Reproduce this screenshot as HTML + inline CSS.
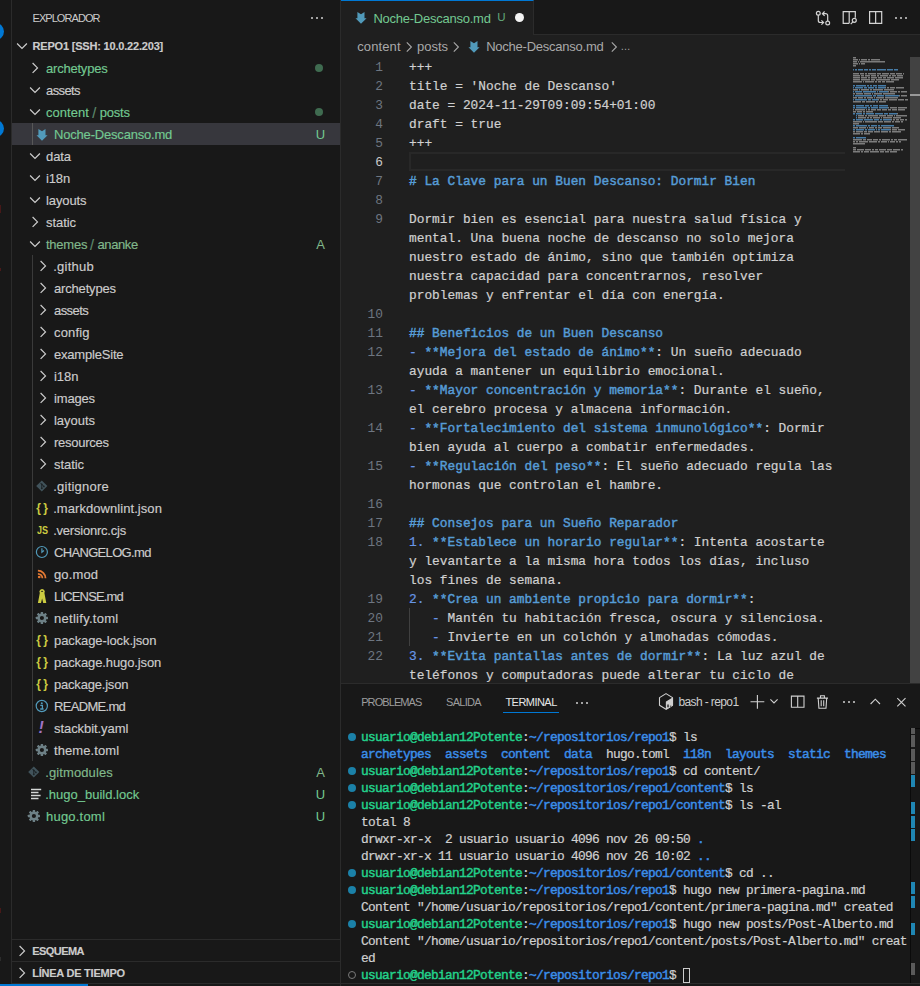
<!DOCTYPE html>
<html lang="es">
<head>
<meta charset="utf-8">
<title>Noche-Descanso.md - repo1 [SSH: 10.0.22.203]</title>
<style>
*{box-sizing:border-box;margin:0;padding:0}
html,body{width:920px;height:986px;overflow:hidden;background:#181818}
body{position:relative;font-family:"Liberation Sans",sans-serif;font-size:13px;color:#ccc;-webkit-font-smoothing:antialiased}
.abs{position:absolute}
/* activity strip */
#act{left:0;top:0;width:12px;height:986px;background:#181818;border-right:1px solid #2b2b2b;overflow:hidden}
.badge{position:absolute;left:-13px;width:17px;height:17px;border-radius:50%;background:#0078d4}
/* sidebar */
#side{left:12px;top:0;width:329px;height:986px;background:#181818;border-right:1px solid #2b2b2b;overflow:hidden}
.row{position:absolute;left:0;width:328px;height:22px;line-height:22px;white-space:nowrap}
.row .t{position:absolute;top:1px;-webkit-text-stroke-width:.15px}
.row .st{position:absolute;top:1px;right:11.5px;width:16px;text-align:center}
.g1{color:#73c991}
.g2{color:#81b88b}
.sep{color:#5d8a6d}
svg{position:absolute;overflow:visible}
.chev{fill:none;stroke:#cdcdcd;stroke-width:1.2}
/* editor */
#tabs{left:341px;top:0;width:579px;height:35px;background:#181818;border-bottom:1px solid #2b2b2b}
#tab{left:0;top:0;width:193px;height:35px;background:#1f1f1f;border-top:1px solid #0078d4;border-right:1px solid #2b2b2b}
#ed{left:341px;top:35px;width:579px;height:648px;background:#1f1f1f;overflow:hidden}
.mono{font-family:"Liberation Mono",monospace}
.ln{position:absolute;left:0;width:42px;text-align:right;color:#6e7681;height:19px;line-height:19px;font-size:12.83px}
.cl{position:absolute;left:68px;height:19px;line-height:19px;white-space:pre;font-size:12.83px;color:#d0d0d0;-webkit-text-stroke-width:.2px}
.h{color:#569cd6;-webkit-text-stroke-width:.45px}
.m{color:#6796e6}
/* panel */
#panel{left:341px;top:683px;width:579px;height:303px;background:#181818;border-top:1px solid #2b2b2b;overflow:hidden}
.tl{position:absolute;left:20px;height:18px;line-height:18px;white-space:pre;font-size:12.83px;letter-spacing:-0.7px;color:#d0d0d0;-webkit-text-stroke-width:.2px}
.tg{color:#23d18b;-webkit-text-stroke-width:.45px}
.tb{color:#3b8eea;-webkit-text-stroke-width:.45px}
.dot{position:absolute;left:7px;width:8px;height:8px;border-radius:50%;background:#1b81a8}
.fi{position:absolute;height:22px;line-height:22px;font-family:"Liberation Sans",sans-serif}
.dots3{width:14px;height:2px}
.dots3 i{position:absolute;top:0;width:2px;height:2px;border-radius:50%;background:#d0d0d0}
.dots3 i:nth-child(1){left:0}.dots3 i:nth-child(2){left:5px}.dots3 i:nth-child(3){left:10px}
</style>
</head>
<body>
<div id="act" class="abs">
  <div class="badge" style="top:23.200px"></div>
  <div class="badge" style="top:119.500px"></div>
  <div class="abs" style="left:0;top:205px;width:1px;height:8px;background:#471818"></div>
  <div class="abs" style="left:0;top:268px;width:1px;height:3px;background:#4a1a1a"></div>
  <div class="abs" style="left:0;top:908px;width:1px;height:5px;background:#471818"></div>
  <div class="abs" style="left:0;top:957px;width:1px;height:4px;background:#2c2c2c"></div>
</div>
<div id="side" class="abs">
<div class="abs" style="left:20.500px;top:1px;height:35px;line-height:35px;font-size:11px;color:#ccc;letter-spacing:-0.94px">EXPLORADOR</div>
<div class="abs dots3" style="left:299px;top:17px"><i></i><i></i><i></i></div>
<div class="row" style="top:35px"><svg style="left:2px;top:3px" width="16" height="16" viewBox="0 0 16 16"><path class="chev" d="M3.100 5.500 L8 10.400 L12.900 5.500"/></svg><span class="t" style="left:20.500px;top:0;font-size:11px;font-weight:bold;color:#ccc;letter-spacing:-0.19px">REPO1 [SSH: 10.0.22.203]</span></div>
<div class="row" style="top:57px"><svg style="left:15px;top:3px" width="16" height="16" viewBox="0 0 16 16"><path class="chev" d="M5.600 3 L10.500 7.900 L5.600 12.800"/></svg><span class="t g1" style="left:34px;letter-spacing:-0.21px">archetypes</span><span class="abs" style="left:303px;top:7px;width:8px;height:8px;border-radius:50%;background:#3f6b50"></span></div>
<div class="row" style="top:79px"><svg style="left:15px;top:3px" width="16" height="16" viewBox="0 0 16 16"><path class="chev" d="M3.100 5.500 L8 10.400 L12.900 5.500"/></svg><span class="t " style="left:34px;letter-spacing:-0.60px">assets</span></div>
<div class="row" style="top:101px"><svg style="left:15px;top:3px" width="16" height="16" viewBox="0 0 16 16"><path class="chev" d="M3.100 5.500 L8 10.400 L12.900 5.500"/></svg><span class="t g1" style="left:34px;letter-spacing:0.05px">content</span><span class="t sep" style="left:80.2px;font-size:14.500px">/</span><span class="t g1" style="left:87.7px;letter-spacing:-0.20px">posts</span><span class="abs" style="left:303px;top:7px;width:8px;height:8px;border-radius:50%;background:#3f6b50"></span></div>
<div class="row" style="top:123px;background:#37373d"><svg style="left:22px;top:4px" width="16" height="16" viewBox="0 0 16 16"><path fill="#519aba" d="M4.4 2 8 4.200 11.500 2V8.200H13.600L8 13.800 2.500 8.200H4.400Z"/></svg><span class="t g1" style="left:42px;letter-spacing:-0.19px">Noche-Descanso.md</span><span class="st g1">U</span></div>
<div class="row" style="top:145px"><svg style="left:15px;top:3px" width="16" height="16" viewBox="0 0 16 16"><path class="chev" d="M3.100 5.500 L8 10.400 L12.900 5.500"/></svg><span class="t " style="left:34px;letter-spacing:-0.08px">data</span></div>
<div class="row" style="top:167px"><svg style="left:15px;top:3px" width="16" height="16" viewBox="0 0 16 16"><path class="chev" d="M3.100 5.500 L8 10.400 L12.900 5.500"/></svg><span class="t " style="left:34px;letter-spacing:-0.14px">i18n</span></div>
<div class="row" style="top:189px"><svg style="left:15px;top:3px" width="16" height="16" viewBox="0 0 16 16"><path class="chev" d="M3.100 5.500 L8 10.400 L12.900 5.500"/></svg><span class="t " style="left:34px;letter-spacing:-0.10px">layouts</span></div>
<div class="row" style="top:211px"><svg style="left:15px;top:3px" width="16" height="16" viewBox="0 0 16 16"><path class="chev" d="M5.600 3 L10.500 7.900 L5.600 12.800"/></svg><span class="t " style="left:34px;letter-spacing:-0.06px">static</span></div>
<div class="row" style="top:233px"><svg style="left:15px;top:3px" width="16" height="16" viewBox="0 0 16 16"><path class="chev" d="M3.100 5.500 L8 10.400 L12.900 5.500"/></svg><span class="t g2" style="left:34px;letter-spacing:-0.24px">themes</span><span class="t sep" style="left:77.9px;font-size:14.500px">/</span><span class="t g2" style="left:85.4px;letter-spacing:-0.36px">ananke</span><span class="st g2">A</span></div>
<div class="row" style="top:255px"><svg style="left:23px;top:3px" width="16" height="16" viewBox="0 0 16 16"><path class="chev" d="M5.600 3 L10.500 7.900 L5.600 12.800"/></svg><span class="t " style="left:41.2px;letter-spacing:0.26px">.github</span></div>
<div class="row" style="top:277px"><svg style="left:23px;top:3px" width="16" height="16" viewBox="0 0 16 16"><path class="chev" d="M5.600 3 L10.500 7.900 L5.600 12.800"/></svg><span class="t " style="left:42px;letter-spacing:-0.17px">archetypes</span></div>
<div class="row" style="top:299px"><svg style="left:23px;top:3px" width="16" height="16" viewBox="0 0 16 16"><path class="chev" d="M5.600 3 L10.500 7.900 L5.600 12.800"/></svg><span class="t " style="left:42px;letter-spacing:-0.58px">assets</span></div>
<div class="row" style="top:321px"><svg style="left:23px;top:3px" width="16" height="16" viewBox="0 0 16 16"><path class="chev" d="M5.600 3 L10.500 7.900 L5.600 12.800"/></svg><span class="t " style="left:42px;letter-spacing:0.15px">config</span></div>
<div class="row" style="top:343px"><svg style="left:23px;top:3px" width="16" height="16" viewBox="0 0 16 16"><path class="chev" d="M5.600 3 L10.500 7.900 L5.600 12.800"/></svg><span class="t " style="left:42px;letter-spacing:-0.20px">exampleSite</span></div>
<div class="row" style="top:365px"><svg style="left:23px;top:3px" width="16" height="16" viewBox="0 0 16 16"><path class="chev" d="M5.600 3 L10.500 7.900 L5.600 12.800"/></svg><span class="t " style="left:42px;letter-spacing:-0.04px">i18n</span></div>
<div class="row" style="top:387px"><svg style="left:23px;top:3px" width="16" height="16" viewBox="0 0 16 16"><path class="chev" d="M5.600 3 L10.500 7.900 L5.600 12.800"/></svg><span class="t " style="left:42px;letter-spacing:-0.17px">images</span></div>
<div class="row" style="top:409px"><svg style="left:23px;top:3px" width="16" height="16" viewBox="0 0 16 16"><path class="chev" d="M5.600 3 L10.500 7.900 L5.600 12.800"/></svg><span class="t " style="left:42px;letter-spacing:-0.04px">layouts</span></div>
<div class="row" style="top:431px"><svg style="left:23px;top:3px" width="16" height="16" viewBox="0 0 16 16"><path class="chev" d="M5.600 3 L10.500 7.900 L5.600 12.800"/></svg><span class="t " style="left:42px;letter-spacing:-0.26px">resources</span></div>
<div class="row" style="top:453px"><svg style="left:23px;top:3px" width="16" height="16" viewBox="0 0 16 16"><path class="chev" d="M5.600 3 L10.500 7.900 L5.600 12.800"/></svg><span class="t " style="left:42px;letter-spacing:-0.06px">static</span></div>
<div class="row" style="top:475px"><svg style="left:22px;top:3px" width="16" height="16" viewBox="0 0 16 16"><path fill="#41535b" d="M7.800 2.400 13.400 8 7.800 13.600 2.200 8z"/><path stroke="#1c2326" stroke-width="1" fill="none" d="M6.300 4.800 9.500 8M7.800 6.200v4.300"/><circle cx="7.800" cy="6.300" r=".9" fill="#1c2326"/><circle cx="7.800" cy="10.300" r=".9" fill="#1c2326"/><circle cx="9.900" cy="8.400" r=".9" fill="#1c2326"/></svg><span class="t " style="left:41.2px;letter-spacing:0.24px">.gitignore</span></div>
<div class="row" style="top:497px"><span class="fi" style="left:24.2px;top:0px;color:#cbcb41;font-weight:bold;font-size:12px;letter-spacing:2.400px">{}</span><span class="t " style="left:41.2px;letter-spacing:0.06px">.markdownlint.json</span></div>
<div class="row" style="top:519px"><span class="fi" style="left:24.7px;top:0px;color:#cbcb41;font-weight:bold;font-size:11px;transform:scaleX(.82);transform-origin:0 50%">JS</span><span class="t " style="left:41.2px;letter-spacing:-0.22px">.versionrc.cjs</span></div>
<div class="row" style="top:541px"><svg style="left:22px;top:3px" width="16" height="16" viewBox="0 0 16 16"><circle cx="7.900" cy="8" r="5.500" fill="none" stroke="#519aba" stroke-width="1.200"/><path d="M7.900 4.200V8.300L10 6.500" fill="none" stroke="#519aba" stroke-width="1.200"/></svg><span class="t " style="left:42px;letter-spacing:-0.67px">CHANGELOG.md</span></div>
<div class="row" style="top:563px"><svg style="left:22px;top:3px" width="16" height="16" viewBox="0 0 16 16"><circle cx="5.200" cy="11" r="1.350" fill="#e37933"/><path d="M3.900 7.800a4.500 4.500 0 0 1 4.500 4.500M3.900 4.700a7.600 7.600 0 0 1 7.600 7.600" fill="none" stroke="#e37933" stroke-width="1.800"/></svg><span class="t " style="left:42px;letter-spacing:0.14px">go.mod</span></div>
<div class="row" style="top:585px"><svg style="left:22px;top:3px" width="16" height="16" viewBox="0 0 16 16"><path fill="#cbcb41" d="M5.800 5.100 A2.700 2.700 0 1 1 10.400 5.100 L12.300 15 H9.200 L8.100 10.500 L7 15 H3.900 Z"/><path fill="#181818" d="M7 3.800 A1.100 1.100 0 1 1 9.200 3.800 Z"/></svg><span class="t " style="left:42px;letter-spacing:-0.83px">LICENSE.md</span></div>
<div class="row" style="top:607px"><svg style="left:22px;top:3px" width="16" height="16" viewBox="0 0 16 16"><rect x="6.700" y="1.900" width="2.400" height="12.200" rx=".4" transform="rotate(0 7.900 8)" fill="#6d8086"/><rect x="6.700" y="1.900" width="2.400" height="12.200" rx=".4" transform="rotate(45 7.900 8)" fill="#6d8086"/><rect x="6.700" y="1.900" width="2.400" height="12.200" rx=".4" transform="rotate(90 7.900 8)" fill="#6d8086"/><rect x="6.700" y="1.900" width="2.400" height="12.200" rx=".4" transform="rotate(135 7.900 8)" fill="#6d8086"/><circle cx="7.900" cy="8" r="4.500" fill="#6d8086"/><circle cx="7.900" cy="8" r="2.100" fill="#181818"/></svg><span class="t " style="left:42px;letter-spacing:0.28px">netlify.toml</span></div>
<div class="row" style="top:629px"><span class="fi" style="left:24.2px;top:0px;color:#cbcb41;font-weight:bold;font-size:12px;letter-spacing:2.400px">{}</span><span class="t " style="left:42px;letter-spacing:-0.10px">package-lock.json</span></div>
<div class="row" style="top:651px"><span class="fi" style="left:24.2px;top:0px;color:#cbcb41;font-weight:bold;font-size:12px;letter-spacing:2.400px">{}</span><span class="t " style="left:42px;letter-spacing:-0.12px">package.hugo.json</span></div>
<div class="row" style="top:673px"><span class="fi" style="left:24.2px;top:0px;color:#cbcb41;font-weight:bold;font-size:12px;letter-spacing:2.400px">{}</span><span class="t " style="left:42px;letter-spacing:-0.20px">package.json</span></div>
<div class="row" style="top:695px"><svg style="left:22px;top:3px" width="16" height="16" viewBox="0 0 16 16"><circle cx="7.800" cy="8" r="5.600" fill="none" stroke="#519aba" stroke-width="1.200"/><circle cx="7.800" cy="5.200" r="1" fill="#519aba"/><path d="M6.300 7.300h2.100v3.600M6.200 11h3.400" fill="none" stroke="#519aba" stroke-width="1.300"/></svg><span class="t " style="left:42px;letter-spacing:-0.68px">README.md</span></div>
<div class="row" style="top:717px"><span class="fi" style="left:26.6px;top:0px;color:#a074c4;font-weight:bold;font-style:italic;font-size:16px">!</span><span class="t " style="left:42px;letter-spacing:-0.07px">stackbit.yaml</span></div>
<div class="row" style="top:739px"><svg style="left:22px;top:3px" width="16" height="16" viewBox="0 0 16 16"><rect x="6.700" y="1.900" width="2.400" height="12.200" rx=".4" transform="rotate(0 7.900 8)" fill="#6d8086"/><rect x="6.700" y="1.900" width="2.400" height="12.200" rx=".4" transform="rotate(45 7.900 8)" fill="#6d8086"/><rect x="6.700" y="1.900" width="2.400" height="12.200" rx=".4" transform="rotate(90 7.900 8)" fill="#6d8086"/><rect x="6.700" y="1.900" width="2.400" height="12.200" rx=".4" transform="rotate(135 7.900 8)" fill="#6d8086"/><circle cx="7.900" cy="8" r="4.500" fill="#6d8086"/><circle cx="7.900" cy="8" r="2.100" fill="#181818"/></svg><span class="t " style="left:42px;letter-spacing:0.09px">theme.toml</span></div>
<div class="row" style="top:761px"><svg style="left:14px;top:3px" width="16" height="16" viewBox="0 0 16 16"><path fill="#41535b" d="M7.800 2.400 13.400 8 7.800 13.600 2.200 8z"/><path stroke="#1c2326" stroke-width="1" fill="none" d="M6.300 4.800 9.500 8M7.800 6.200v4.300"/><circle cx="7.800" cy="6.300" r=".9" fill="#1c2326"/><circle cx="7.800" cy="10.300" r=".9" fill="#1c2326"/><circle cx="9.900" cy="8.400" r=".9" fill="#1c2326"/></svg><span class="t g2" style="left:33.2px;letter-spacing:0.11px">.gitmodules</span><span class="st g2">A</span></div>
<div class="row" style="top:783px"><svg style="left:14px;top:3px" width="16" height="16" viewBox="0 0 16 16"><path d="M5 3.500h10.200M5 6.500h7.500M5 9.600h9.600M5 12.500h7.500" stroke="#d4d7d6" stroke-width="1.500" fill="none"/></svg><span class="t g1" style="left:33.2px;letter-spacing:-0.00px">.hugo_build.lock</span><span class="st g1">U</span></div>
<div class="row" style="top:805px"><svg style="left:14px;top:3px" width="16" height="16" viewBox="0 0 16 16"><rect x="6.700" y="1.900" width="2.400" height="12.200" rx=".4" transform="rotate(0 7.900 8)" fill="#6d8086"/><rect x="6.700" y="1.900" width="2.400" height="12.200" rx=".4" transform="rotate(45 7.900 8)" fill="#6d8086"/><rect x="6.700" y="1.900" width="2.400" height="12.200" rx=".4" transform="rotate(90 7.900 8)" fill="#6d8086"/><rect x="6.700" y="1.900" width="2.400" height="12.200" rx=".4" transform="rotate(135 7.900 8)" fill="#6d8086"/><circle cx="7.900" cy="8" r="4.500" fill="#6d8086"/><circle cx="7.900" cy="8" r="2.100" fill="#181818"/></svg><span class="t g1" style="left:34px;letter-spacing:0.21px">hugo.toml</span><span class="st g1">U</span></div>
<div class="abs" style="left:20px;top:123px;width:1px;height:22px;background:#585858"></div>
<div class="abs" style="left:20px;top:255px;width:1px;height:506px;background:#3a3a3a"></div>
<div class="abs" style="left:0;top:939px;width:328px;height:1px;background:#2b2b2b"></div>
<div class="row" style="top:940px"><svg style="left:2px;top:3px" width="16" height="16" viewBox="0 0 16 16"><path class="chev" d="M5.600 3 L10.500 7.900 L5.600 12.800"/></svg><span class="t" style="left:20.200px;top:0;font-size:11px;font-weight:bold;letter-spacing:-0.55px">ESQUEMA</span></div>
<div class="abs" style="left:0;top:961px;width:328px;height:1px;background:#2b2b2b"></div>
<div class="row" style="top:962px"><svg style="left:2px;top:3px" width="16" height="16" viewBox="0 0 16 16"><path class="chev" d="M5.600 3 L10.500 7.900 L5.600 12.800"/></svg><span class="t" style="left:20.200px;top:0;font-size:11px;font-weight:bold;letter-spacing:-0.23px">LÍNEA DE TIEMPO</span></div>
<div class="abs" style="left:0;top:983px;width:328px;height:1px;background:#2b2b2b"></div>
</div>
<div id="tabs" class="abs">
  <div id="tab" class="abs">
<svg style="left:11.6px;top:9px" width="16" height="16" viewBox="0 0 16 16"><path fill="#519aba" d="M4.4 2 8 4.200 11.500 2V8.200H13.600L8 13.800 2.500 8.200H4.400Z"/></svg><span class="abs g1" style="left:32.400px;top:1px;height:34px;line-height:34px;white-space:nowrap;letter-spacing:-0.24px">Noche-Descanso.md</span><span class="abs g1" style="left:156.200px;top:0;height:33px;line-height:33px;font-size:11.500px;opacity:.8">U</span><span class="abs" style="left:174px;top:12.300px;width:9px;height:9px;border-radius:50%;background:#f4f4f4"></span>
  </div>
<svg style="left:474.400px;top:10px" width="16" height="16" viewBox="0 0 16 16" fill="none" stroke="#d4d4d4" stroke-width="1.200"><circle cx="3.300" cy="3.200" r="1.900"/><circle cx="12.700" cy="13" r="1.900"/><path d="M3.300 5.100V10.500a2 2 0 0 0 2 2H8.300M6.400 10.300 8.600 12.500 6.400 14.700M12.700 11.100V5.700a2 2 0 0 0-2-2H7.700M9.600 1.500 7.400 3.700 9.600 5.900"/></svg>
<svg style="left:500px;top:10px" width="16" height="16" viewBox="0 0 16 16" fill="none" stroke="#d4d4d4" stroke-width="1.200"><path d="M14.300 7.800V1.600H2.200V13.300H8.200M8.200 1.600V13.300"/><circle cx="13.300" cy="10.300" r="2"/><path d="M11.900 11.800 9.700 14.100"/></svg>
<svg style="left:526px;top:10px" width="16" height="16" viewBox="0 0 16 16" fill="none" stroke="#d4d4d4" stroke-width="1.200"><path d="M2.600 1.600H14.700V13.300H2.600ZM8.650 1.600V13.300"/></svg>
<div class="abs dots3" style="left:554px;top:17px"><i></i><i></i><i></i></div>
</div>
<div id="ed" class="abs">
<div class="abs" style="left:0;top:1px;width:579px;height:22px;line-height:22px;color:#a9a9a9;white-space:nowrap"><span class="abs" style="left:16.200px;letter-spacing:0.11px">content</span><svg style="left:60px;top:3px" width="16" height="16" viewBox="0 0 16 16"><path d="M5.8 3.4 10.4 8 5.8 12.600" fill="none" stroke="#a9a9a9" stroke-width="1.1"/></svg><span class="abs" style="left:76px">posts</span><svg style="left:107px;top:3px" width="16" height="16" viewBox="0 0 16 16"><path d="M5.8 3.4 10.4 8 5.8 12.600" fill="none" stroke="#a9a9a9" stroke-width="1.1"/></svg><svg style="left:124.6px;top:2.5px" width="16" height="16" viewBox="0 0 16 16"><path fill="#519aba" d="M4.4 2 8 4.200 11.500 2V8.200H13.600L8 13.800 2.500 8.200H4.400Z"/></svg><span class="abs" style="left:145.200px;letter-spacing:-0.24px">Noche-Descanso.md</span><svg style="left:265px;top:3px" width="16" height="16" viewBox="0 0 16 16"><path d="M5.8 3.4 10.4 8 5.8 12.600" fill="none" stroke="#a9a9a9" stroke-width="1.1"/></svg><span class="abs" style="left:279.600px;font-size:10px">…</span></div>
<div class="ln mono" style="top:23px">1</div>
<div class="cl mono" style="top:23px">+++</div>
<div class="ln mono" style="top:42px">2</div>
<div class="cl mono" style="top:42px">title = 'Noche de Descanso'</div>
<div class="ln mono" style="top:61px">3</div>
<div class="cl mono" style="top:61px">date = 2024-11-29T09:09:54+01:00</div>
<div class="ln mono" style="top:80px">4</div>
<div class="cl mono" style="top:80px">draft = true</div>
<div class="ln mono" style="top:99px">5</div>
<div class="cl mono" style="top:99px">+++</div>
<div class="abs" style="left:68px;top:117px;width:436px;height:19px;border:2px solid #282828;border-right:none"></div>
<div class="ln mono" style="top:118px;color:#ccc">6</div>
<div class="ln mono" style="top:137px">7</div>
<div class="cl mono" style="top:137px"><span class="h"># La Clave para un Buen Descanso: Dormir Bien</span></div>
<div class="ln mono" style="top:156px">8</div>
<div class="ln mono" style="top:175px">9</div>
<div class="cl mono" style="top:175px">Dormir bien es esencial para nuestra salud física y</div>
<div class="cl mono" style="top:194px">mental. Una buena noche de descanso no solo mejora</div>
<div class="cl mono" style="top:213px">nuestro estado de ánimo, sino que también optimiza</div>
<div class="cl mono" style="top:232px">nuestra capacidad para concentrarnos, resolver</div>
<div class="cl mono" style="top:251px">problemas y enfrentar el día con energía.</div>
<div class="ln mono" style="top:270px">10</div>
<div class="ln mono" style="top:289px">11</div>
<div class="cl mono" style="top:289px"><span class="h">## Beneficios de un Buen Descanso</span></div>
<div class="ln mono" style="top:308px">12</div>
<div class="cl mono" style="top:308px"><span class="m">- </span><span class="h">**Mejora del estado de ánimo**</span>: Un sueño adecuado</div>
<div class="cl mono" style="top:327px">ayuda a mantener un equilibrio emocional.</div>
<div class="ln mono" style="top:346px">13</div>
<div class="cl mono" style="top:346px"><span class="m">- </span><span class="h">**Mayor concentración y memoria**</span>: Durante el sueño,</div>
<div class="cl mono" style="top:365px">el cerebro procesa y almacena información.</div>
<div class="ln mono" style="top:384px">14</div>
<div class="cl mono" style="top:384px"><span class="m">- </span><span class="h">**Fortalecimiento del sistema inmunológico**</span>: Dormir</div>
<div class="cl mono" style="top:403px">bien ayuda al cuerpo a combatir enfermedades.</div>
<div class="ln mono" style="top:422px">15</div>
<div class="cl mono" style="top:422px"><span class="m">- </span><span class="h">**Regulación del peso**</span>: El sueño adecuado regula las</div>
<div class="cl mono" style="top:441px">hormonas que controlan el hambre.</div>
<div class="ln mono" style="top:460px">16</div>
<div class="ln mono" style="top:479px">17</div>
<div class="cl mono" style="top:479px"><span class="h">## Consejos para un Sueño Reparador</span></div>
<div class="ln mono" style="top:498px">18</div>
<div class="cl mono" style="top:498px"><span class="m">1. </span><span class="h">**Establece un horario regular**</span>: Intenta acostarte</div>
<div class="cl mono" style="top:517px">y levantarte a la misma hora todos los días, incluso</div>
<div class="cl mono" style="top:536px">los fines de semana.</div>
<div class="ln mono" style="top:555px">19</div>
<div class="cl mono" style="top:555px"><span class="m">2. </span><span class="h">**Crea un ambiente propicio para dormir**</span>:</div>
<div class="ln mono" style="top:574px">20</div>
<div class="cl mono" style="top:574px">   <span class="m">- </span>Mantén tu habitación fresca, oscura y silenciosa.</div>
<div class="ln mono" style="top:593px">21</div>
<div class="cl mono" style="top:593px">   <span class="m">- </span>Invierte en un colchón y almohadas cómodas.</div>
<div class="ln mono" style="top:612px">22</div>
<div class="cl mono" style="top:612px"><span class="m">3. </span><span class="h">**Evita pantallas antes de dormir**</span>: La luz azul de</div>
<div class="cl mono" style="top:631px">teléfonos y computadoras puede alterar tu ciclo de</div>
<div class="abs" style="left:68px;top:573px;width:1px;height:38px;background:#404040"></div>
<svg style="left:0;top:0" width="569" height="200" viewBox="0 0 569 200" fill="none" stroke-width="1.400"><path stroke="#c8c8c8" stroke-opacity=".55" d="M512 22.8h3M512 24.8h5M518 24.8h1M520 24.8h6M527 24.8h2M530 24.8h9M512 26.8h4M517 26.8h1M519 26.8h25M512 28.8h5M518 28.8h1M520 28.8h4M512 30.8h3M512 38.8h6M519 38.8h4M524 38.8h2M527 38.8h8M536 38.8h4M541 38.8h7M549 38.8h5M555 38.8h6M562 38.8h1M512 40.8h7M520 40.8h3M524 40.8h5M530 40.8h5M536 40.8h2M539 40.8h8M548 40.8h2M551 40.8h4M556 40.8h6M512 42.8h7M520 42.8h6M527 42.8h2M530 42.8h6M537 42.8h4M542 42.8h3M546 42.8h7M554 42.8h8M512 44.8h7M520 44.8h9M530 44.8h4M535 44.8h14M550 44.8h8M512 46.8h9M522 46.8h1M524 46.8h9M534 46.8h2M537 46.8h3M541 46.8h3M545 46.8h8M544 52.8h1M546 52.8h2M549 52.8h5M555 52.8h8M512 54.8h5M518 54.8h1M520 54.8h8M529 54.8h2M532 54.8h10M543 54.8h10M547 56.8h1M549 56.8h7M557 56.8h2M560 56.8h6M512 58.8h2M515 58.8h7M523 58.8h7M531 58.8h1M533 58.8h8M542 58.8h12M558 60.8h1M560 60.8h6M512 62.8h4M517 62.8h5M523 62.8h2M526 62.8h6M533 62.8h1M535 62.8h8M544 62.8h13M537 64.8h1M539 64.8h2M542 64.8h5M548 64.8h8M557 64.8h6M564 64.8h3M512 66.8h8M521 66.8h3M525 66.8h9M535 66.8h2M538 66.8h7M547 72.8h1M549 72.8h7M557 72.8h9M512 74.8h1M514 74.8h10M525 74.8h1M527 74.8h2M530 74.8h5M536 74.8h4M541 74.8h5M547 74.8h3M551 74.8h5M557 74.8h7M512 76.8h3M516 76.8h5M522 76.8h2M525 76.8h7M556 78.8h1M517 80.8h6M524 80.8h2M527 80.8h10M538 80.8h7M546 80.8h6M553 80.8h1M555 80.8h11M517 82.8h8M526 82.8h2M529 82.8h2M532 82.8h7M540 82.8h1M542 82.8h9M552 82.8h8M550 84.8h1M552 84.8h2M555 84.8h3M559 84.8h4M564 84.8h2M512 86.8h9M522 86.8h1M524 86.8h12M537 86.8h5M543 86.8h7M551 86.8h2M554 86.8h5M560 86.8h2M512 88.8h6M512 92.8h5M518 92.8h7M526 92.8h1M528 92.8h5M534 92.8h2M537 92.8h4M542 92.8h8M551 92.8h7M549 94.8h1M551 94.8h5M557 94.8h7M512 96.8h2M515 96.8h7M523 96.8h3M527 96.8h5M533 96.8h6M540 96.8h7M548 96.8h2M551 96.8h9M512 98.8h7M520 98.8h2M523 98.8h6M512 104.8h9M522 104.8h3M526 104.8h5M532 104.8h5M538 104.8h2M541 104.8h8M550 104.8h2M553 104.8h3M557 104.8h9M512 106.8h2M515 106.8h2M518 106.8h9M528 106.8h8M537 106.8h2M540 106.8h6M547 106.8h1M549 106.8h5M555 106.8h2M558 106.8h2M512 108.8h12M512 112.8h3M512 114.8h3M516 114.8h7M524 114.8h6M531 114.8h2M534 114.8h3M538 114.8h7M546 114.8h5M552 114.8h7M560 114.8h2M512 116.8h7M520 116.8h2M523 116.8h5M529 116.8h9M539 116.8h4M544 116.8h4M549 116.8h7"/><path stroke="#569cd6" stroke-opacity=".75" d="M512 34.8h1M514 34.8h2M517 34.8h5M523 34.8h4M528 34.8h2M531 34.8h4M536 34.8h9M546 34.8h6M553 34.8h4M512 50.8h2M515 50.8h10M526 50.8h2M529 50.8h2M532 50.8h4M537 50.8h8M512 52.8h1M514 52.8h8M523 52.8h3M527 52.8h6M534 52.8h2M537 52.8h7M512 56.8h1M514 56.8h7M522 56.8h13M536 56.8h1M538 56.8h9M512 60.8h1M514 60.8h17M532 60.8h3M536 60.8h7M544 60.8h14M512 64.8h1M514 64.8h12M527 64.8h3M531 64.8h6M512 70.8h2M515 70.8h8M524 70.8h4M529 70.8h2M532 70.8h5M538 70.8h9M512 72.8h2M515 72.8h11M527 72.8h2M530 72.8h7M538 72.8h9M512 78.8h2M515 78.8h6M522 78.8h2M525 78.8h8M534 78.8h8M543 78.8h4M548 78.8h8M515 80.8h1M515 82.8h1M512 84.8h2M515 84.8h7M523 84.8h9M533 84.8h5M539 84.8h2M542 84.8h8M512 90.8h2M515 90.8h11M527 90.8h2M530 90.8h6M537 90.8h2M540 90.8h13M512 94.8h2M515 94.8h8M524 94.8h2M527 94.8h7M535 94.8h1M537 94.8h2M540 94.8h9M512 102.8h2M515 102.8h10"/></svg>
<div class="abs" style="left:569px;top:22px;width:10px;height:626px;background:#424242"></div>
<div class="abs" style="left:569px;top:59px;width:10px;height:2px;background:#9a9a9a"></div>
</div>
<div id="panel" class="abs">
<div class="abs" style="left:20.200px;top:7px;height:22px;line-height:22px;font-size:11px;color:#9d9d9d;letter-spacing:-0.91px">PROBLEMAS</div>
<div class="abs" style="left:105px;top:7px;height:22px;line-height:22px;font-size:11px;color:#9d9d9d;letter-spacing:-0.71px">SALIDA</div>
<div class="abs" style="left:164.400px;top:7px;height:22px;line-height:22px;font-size:11px;color:#e7e7e7;letter-spacing:-0.53px">TERMINAL</div>
<div class="abs" style="left:162px;top:28px;width:56px;height:1px;background:#0078d4"></div>
<div class="abs dots3" style="left:234.500px;top:17.500px"><i></i><i></i><i></i></div>
<svg style="left:316.300px;top:8.400px" width="18" height="20" viewBox="0 0 18 20" fill="none" stroke="#cfcfcf" stroke-width="1.100" stroke-linejoin="round"><path d="M9 1.600 15.500 5.600V13.300L9 17.300 2.500 13.300V5.600Z"/><path fill="#cfcfcf" d="M9.400 10 15.500 6.200V13.300L9.400 17Z"/><path stroke="#333" stroke-width="1" d="M11 12.600v2.600M10.300 13.200h1.500M10.300 14.700h1.500M12.900 14.200h1.400"/></svg>
<div class="abs" style="left:337.500px;top:7px;height:22px;line-height:22px;font-size:12px;color:#ccc;white-space:nowrap;letter-spacing:-0.62px">bash - repo1</div>
<svg style="left:409px;top:8.500px" width="16" height="16" viewBox="0 0 16 16" fill="none" stroke="#d0d0d0" stroke-width="1.1"><path d="M7.400 1.900V15.700M.500 8.800H14.300"/></svg>
<svg style="left:425px;top:9.200px" width="16" height="16" viewBox="0 0 16 16" fill="none" stroke="#d0d0d0" stroke-width="1.1"><path d="M4.400 6.300 8 9.900 11.600 6.300"/></svg>
<svg style="left:449px;top:8.500px" width="16" height="16" viewBox="0 0 16 16" fill="none" stroke="#d0d0d0" stroke-width="1.1"><path d="M1.400 3.100H14V14.300H1.400ZM7.700 3.100V14.300"/></svg>
<svg style="left:474px;top:8.500px" width="16" height="16" viewBox="0 0 16 16" fill="none" stroke="#d0d0d0" stroke-width="1.1"><path d="M1.900 5.100H13M5.500 5V2.700H9.400V5M3.200 5.100 3.900 15.200H11L11.700 5.100M6.200 7.200V13.200M8.700 7.200V13.200"/></svg>
<div class="abs dots3" style="left:502px;top:17px"><i></i><i></i><i></i></div>
<svg style="left:525px;top:8.500px" width="16" height="16" viewBox="0 0 16 16" fill="none" stroke="#d0d0d0" stroke-width="1.1"><path d="M4.600 11 9.300 6.200 14 11"/></svg>
<svg style="left:552px;top:8.500px" width="16" height="16" viewBox="0 0 16 16" fill="none" stroke="#d0d0d0" stroke-width="1.1"><path d="M4.300 5.100 12.500 13.300M12.500 5.100 4.300 13.300"/></svg>
<div class="dot" style="top:49px"></div>
<div class="tl mono" style="top:45px"><span class="tg">usuario@debian12Potente</span>:<span class="tb">~/repositorios/repo1</span>$ ls</div>
<div class="tl mono" style="top:62px"><span class="tb">archetypes</span>  <span class="tb">assets</span>  <span class="tb">content</span>  <span class="tb">data</span>  hugo.toml  <span class="tb">i18n</span>  <span class="tb">layouts</span>  <span class="tb">static</span>  <span class="tb">themes</span></div>
<div class="dot" style="top:83px"></div>
<div class="tl mono" style="top:79px"><span class="tg">usuario@debian12Potente</span>:<span class="tb">~/repositorios/repo1</span>$ cd content/</div>
<div class="dot" style="top:100px"></div>
<div class="tl mono" style="top:96px"><span class="tg">usuario@debian12Potente</span>:<span class="tb">~/repositorios/repo1/content</span>$ ls</div>
<div class="dot" style="top:117px"></div>
<div class="tl mono" style="top:113px"><span class="tg">usuario@debian12Potente</span>:<span class="tb">~/repositorios/repo1/content</span>$ ls -al</div>
<div class="tl mono" style="top:130px">total 8</div>
<div class="tl mono" style="top:147px">drwxr-xr-x  2 usuario usuario 4096 nov 26 09:50 <span class="tb">.</span></div>
<div class="tl mono" style="top:164px">drwxr-xr-x 11 usuario usuario 4096 nov 26 10:02 <span class="tb">..</span></div>
<div class="dot" style="top:185px"></div>
<div class="tl mono" style="top:181px"><span class="tg">usuario@debian12Potente</span>:<span class="tb">~/repositorios/repo1/content</span>$ cd ..</div>
<div class="dot" style="top:202px"></div>
<div class="tl mono" style="top:198px"><span class="tg">usuario@debian12Potente</span>:<span class="tb">~/repositorios/repo1</span>$ hugo new primera-pagina.md</div>
<div class="tl mono" style="top:215px">Content "/home/usuario/repositorios/repo1/content/primera-pagina.md" created</div>
<div class="dot" style="top:236px"></div>
<div class="tl mono" style="top:232px"><span class="tg">usuario@debian12Potente</span>:<span class="tb">~/repositorios/repo1</span>$ hugo new posts/Post-Alberto.md</div>
<div class="tl mono" style="top:249px">Content "/home/usuario/repositorios/repo1/content/posts/Post-Alberto.md" creat</div>
<div class="tl mono" style="top:266px">ed</div>
<div class="dot" style="top:287px;background:none;border:1.500px solid #7a7a7a"></div>
<div class="tl mono" style="top:283px"><span class="tg">usuario@debian12Potente</span>:<span class="tb">~/repositorios/repo1</span>$ </div>
<div class="abs" style="left:342px;top:284px;width:7px;height:15px;border:1px solid #ccc"></div>
<div class="abs" style="left:569px;top:44px;width:10px;height:255px;border-left:1px solid #0a0a0a;border-top:1px solid #0a0a0a"></div>
<div class="abs" style="left:570px;top:44px;width:4px;height:6px;background:#5a5a5a"></div>
<div class="abs" style="left:570px;top:51px;width:4px;height:12px;background:#5a5a5a"></div>
<div class="abs" style="left:570px;top:65px;width:4px;height:12px;background:#5a5a5a"></div>
<div class="abs" style="left:570px;top:78px;width:4px;height:12px;background:#5a5a5a"></div>
<div class="abs" style="left:570px;top:91px;width:4px;height:12px;background:#1f86b3"></div>
<div class="abs" style="left:570px;top:118px;width:4px;height:12px;background:#1f86b3"></div>
<div class="abs" style="left:570px;top:132px;width:4px;height:12px;background:#1f86b3"></div>
<div class="abs" style="left:570px;top:145px;width:4px;height:12px;background:#1f86b3"></div>
<div class="abs" style="left:570px;top:198px;width:4px;height:12px;background:#1f86b3"></div>
<div class="abs" style="left:570px;top:212px;width:4px;height:12px;background:#1f86b3"></div>
<div class="abs" style="left:570px;top:239px;width:4px;height:12px;background:#1f86b3"></div>
<div class="abs" style="left:570px;top:279px;width:4px;height:12px;background:#5a5a5a"></div>
<div class="abs" style="left:0;top:299px;width:579px;height:1px;background:#2b2b2b"></div>
</div>
<div class="abs" style="left:0;top:984px;width:88px;height:2px;background:#0078d4"></div>
</body>
</html>
